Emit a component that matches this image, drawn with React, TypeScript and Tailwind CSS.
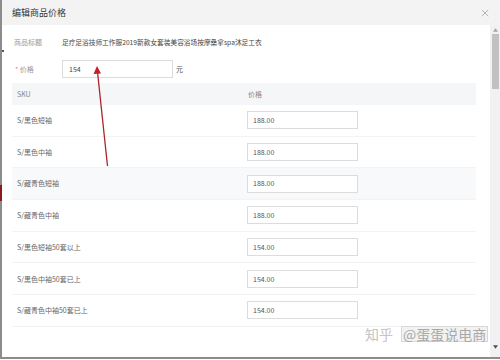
import React from 'react';

const rows = [
  { sku: 'S/黑色短袖', price: '188.00' },
  { sku: 'S/黑色中袖', price: '188.00' },
  { sku: 'S/藏青色短袖', price: '188.00', active: true },
  { sku: 'S/藏青色中袖', price: '188.00' },
  { sku: 'S/黑色短袖50套以上', price: '154.00' },
  { sku: 'S/黑色中袖50套已上', price: '154.00' },
  { sku: 'S/藏青色中袖50套已上', price: '154.00' },
];

const font = { fontFamily: '"Noto Sans CJK SC", "Noto Sans", sans-serif' };

const App: React.FC = () => {
  return (
    <div className="relative w-[500px] h-[360px] overflow-hidden bg-white" style={font}>
      <div className="flex flex-col h-[359px] border-l-2 border-b-2 border-[#8c8c8c]">
        {/* header */}
        <div className="flex items-center justify-between h-[25px] bg-[#f3f3f3] pl-[10px] pr-[11px]">
          <span className="text-[9px] text-[#333]">编辑商品价格</span>
          <svg className="w-[8px] h-[8px]" viewBox="0 0 10 10" fill="none" stroke="#9a9a9a" strokeWidth={0.9}>
            <path d="M1 1L9 9M9 1L1 9" />
          </svg>
        </div>

        <div className="flex flex-1 min-h-0">
          {/* content */}
          <div className="flex-1 pl-[10px] pr-[14px]">
            <div className="flex items-center h-[14px] mt-[10px] text-[7px]">
              <span className="w-[50px] pl-[2px] text-[#999]">商品标题</span>
              <span className="text-[6.7px] text-[#444]">足疗足浴技师工作服2019新款女套装美容浴场按摩桑拿spa沐足工衣</span>
            </div>

            <div className="flex items-center h-[18px] mt-[11px] text-[7px]">
              <span className="w-[50px] pl-[3px] text-[#999]">
                <span className="text-[#e08a8a]">*</span> 价格
              </span>
              <div className="flex items-center w-[111px] h-[18px] border border-[#dcdcdc] pl-[6px] text-[#444]">154</div>
              <span className="ml-[3px] text-[#555]">元</span>
            </div>

            <div className="flex items-center h-[22px] mt-[5px] bg-[#f5f6f8] text-[7px] text-[#888]">
              <span className="w-[235px] pl-[5px]">SKU</span>
              <span className="pl-[1px]">价格</span>
            </div>

            {rows.map((row, i) => (
              <div
                key={i}
                className={`flex items-center h-[31.7px] border-b border-[#f3f3f3] text-[7px] ${row.active ? 'bg-[#f8f9fb]' : 'bg-white'}`}
              >
                <span className="w-[235px] pl-[5px] text-[#666]">{row.sku}</span>
                <div className="flex items-center w-[111px] h-[18px] border border-[#dcdcdc] bg-white pl-[5px] text-[#555]">
                  {row.price}
                </div>
              </div>
            ))}
          </div>

          {/* scrollbar */}
          <div className="flex flex-col items-center w-[10px] bg-[#f1f1f1] pt-[3px] pb-[8px]">
            <svg className="w-[5px] h-[4px]" viewBox="0 0 6 4">
              <path d="M0 4L3 0L6 4Z" fill="#a3a3a3" />
            </svg>
            <div className="w-[7px] h-[55px] mt-[2px] bg-[#c1c1c1]" />
            <div className="flex-1" />
            <svg className="w-[5px] h-[4px]" viewBox="0 0 6 4">
              <path d="M0 0L6 0L3 4Z" fill="#505050" />
            </svg>
          </div>
        </div>
      </div>

      {/* left edge marks */}
      <div className="absolute left-0 top-[185px] w-[2px] h-[16px] bg-[#8b1a1a]" />
      <div className="absolute left-[2px] top-[50px] w-[2px] h-[2px] bg-[#555]" />

      {/* red annotation arrow */}
      <svg className="absolute left-0 top-0 w-[500px] h-[360px] pointer-events-none" viewBox="0 0 500 360">
        <line x1="107.5" y1="166" x2="97.5" y2="72" stroke="#a8262c" strokeWidth={1.3} />
        <path d="M97 66L93.5 74L101 73.5Z" fill="#c0212a" />
      </svg>

      {/* watermark */}
      <div className="absolute left-[365px] top-[326px] flex items-center text-[14px] leading-none text-[#c4c4c4]">
        <span>知乎</span>
        <span className="ml-[8px] px-[1px] text-[#a9a9a9] bg-[#f2f2f2] border border-[#d8d8d8]">@蛋蛋说电商</span>
      </div>
    </div>
  );
};

export default App;
